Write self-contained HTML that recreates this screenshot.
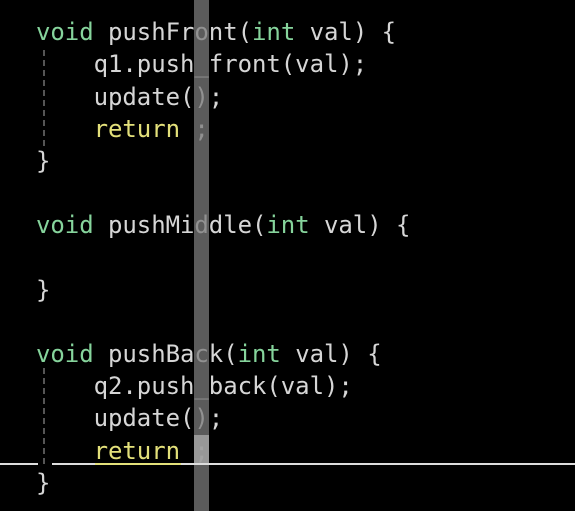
<!DOCTYPE html>
<html><head><style>
body{margin:0;width:575px;height:511px;background:#000;overflow:hidden;position:relative;font-family:"DejaVu Sans Mono","Liberation Mono",monospace;}
.l{position:absolute;left:36px;font-size:24px;line-height:32px;color:#d6d6d6;white-space:pre;height:32px;letter-spacing:-0.05px}
.k{color:#86d49c}.y{color:#e3e07a}
.bar{position:absolute;left:194px;top:0;width:15px;height:511px;background:#7a7a7a;opacity:.75}
.hl{position:absolute;left:194px;top:435px;width:15px;height:30px;background:#a8a8a8;opacity:.8}
.g{position:absolute;left:43px;width:0;border-left:2px dashed #555}
.hr{position:absolute;top:463px;height:2px;background:#ddd}
</style></head><body>
<div class="g" style="top:50px;height:96px"></div>
<div class="g" style="top:368px;height:96px"></div>
<div class="l" style="top:16px"><span class="k">void</span> pushFront(<span class="k">int</span> val) {</div>
<div class="l" style="top:48px">    q1.push_front(val);</div>
<div class="l" style="top:81px">    update();</div>
<div class="l" style="top:113px">    <span class="y">return</span> ;</div>
<div class="l" style="top:145px">}</div>
<div class="l" style="top:209px"><span class="k">void</span> pushMiddle(<span class="k">int</span> val) {</div>
<div class="l" style="top:274px">}</div>
<div class="l" style="top:338px"><span class="k">void</span> pushBack(<span class="k">int</span> val) {</div>
<div class="l" style="top:370px">    q2.push_back(val);</div>
<div class="l" style="top:402px">    update();</div>
<div class="l" style="top:435px">    <span class="y">return</span> ;</div>
<div class="l" style="top:467px">}</div>
<div class="bar"></div><div class="hl"></div>
<div class="hr" style="left:0;width:38px"></div>
<div class="hr" style="left:52px;width:523px"></div>
<div class="hr" style="left:95px;width:86px;background:#e3e07a"></div>
</body></html>
